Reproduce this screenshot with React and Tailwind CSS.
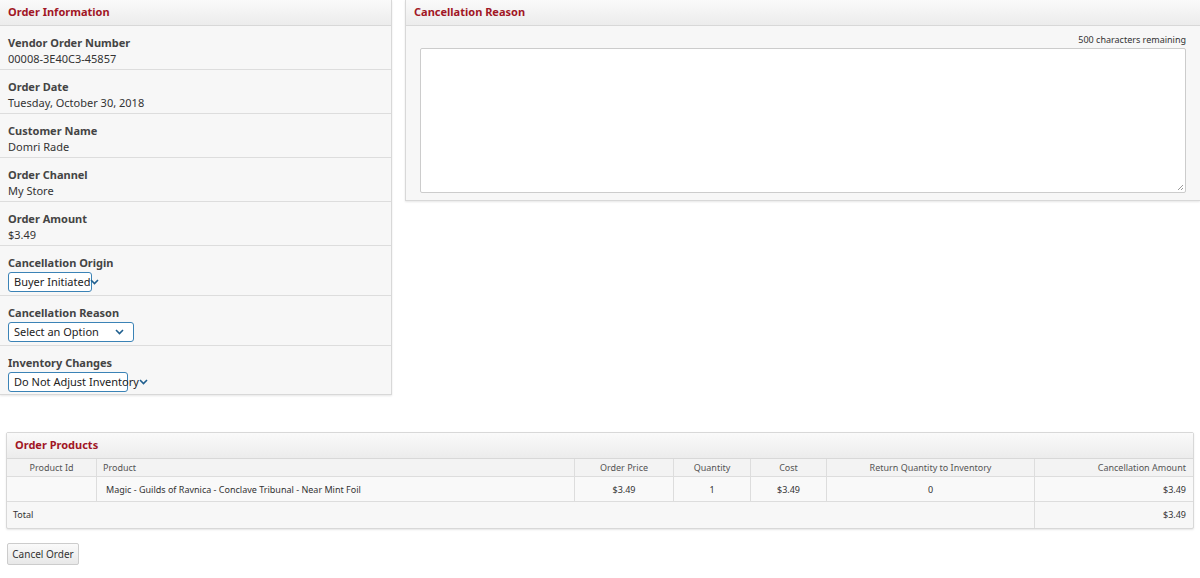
import React from "react";

const Chev = () => (
  <svg width="9" height="6" viewBox="0 0 9 6" className="ml-auto shrink-0"><path d="M1 1l3.5 3.5L8 1" stroke="#1f5f8f" strokeWidth="1.6" fill="none"/></svg>
);

const Sel = ({ text, w }) => (
  <div className={`mt-[3px] h-[20px] ${w} flex items-center whitespace-nowrap px-[5px] pr-[9px] border border-[#3b83b6] rounded-[3px] bg-white text-[11px] text-[#222]`}>
    <span>{text}</span><Chev />
  </div>
);

const Row = ({ label, value, sel, h }) => (
  <div className={`${h} border-b border-[#ddd] px-2 pt-[10px]`}>
    <div className="text-[11px] font-bold text-[#444] leading-[13px]">{label}</div>
    {value && <div className="text-[11px] text-[#333] mt-[3px] leading-[13px]">{value}</div>}
    {sel}
  </div>
);

const Head = ({ t }) => (
  <div className="h-[26px] flex items-center px-2 text-[11px] font-bold text-[#a11625] bg-gradient-to-b from-[#fafafa] to-[#ececec] border-b border-[#d8d8d8]">{t}</div>
);

export default function App() {
  const cols = [
    ["Product Id", "w-[90px] text-center"],
    ["Product", "w-[478px] text-left pl-[6px]"],
    ["Order Price", "w-[99px] text-center"],
    ["Quantity", "w-[77px] text-center"],
    ["Cost", "w-[76px] text-center"],
    ["Return Quantity to Inventory", "w-[208px] text-center"],
    ["Cancellation Amount", "flex-1 text-right pr-[7px]"],
  ];
  const vals = ["", "Magic - Guilds of Ravnica - Conclave Tribunal - Near Mint Foil", "$3.49", "1", "$3.49", "0", "$3.49"];
  return (
    <div className="w-[1200px] h-[578px] bg-white [font-family:'Liberation_Sans',Arial,sans-serif] text-[#333] relative">
      <div className="flex items-start">
        <div className="w-[392px] bg-[#f7f7f7] border border-t-0 border-l-0 border-[#d8d8d8] shadow-[0_1px_2px_rgba(0,0,0,0.1)]">
          <Head t="Order Information" />
          <Row h="h-[44px]" label="Vendor Order Number" value="00008-3E40C3-45857" />
          <Row h="h-[44px]" label="Order Date" value="Tuesday, October 30, 2018" />
          <Row h="h-[44px]" label="Customer Name" value="Domri Rade" />
          <Row h="h-[44px]" label="Order Channel" value="My Store" />
          <Row h="h-[44px]" label="Order Amount" value="$3.49" />
          <Row h="h-[50px]" label="Cancellation Origin" sel={<Sel text="Buyer Initiated" w="w-[84px]" />} />
          <Row h="h-[50px]" label="Cancellation Reason" sel={<Sel text="Select an Option" w="w-[126px]" />} />
          <div className="h-[48px] px-2 pt-[10px]">
            <div className="text-[11px] font-bold text-[#444] leading-[13px]">Inventory Changes</div>
            <Sel text="Do Not Adjust Inventory" w="w-[120px]" />
          </div>
        </div>
        <div className="ml-[13px] flex-1 h-[201px] bg-[#f7f7f7] border border-t-0 border-r-0 border-[#d8d8d8] shadow-[0_1px_2px_rgba(0,0,0,0.1)]">
          <Head t="Cancellation Reason" />
          <div className="text-right text-[9px] pr-[14px] pt-[8px] leading-[11px] text-[#333]">500 characters remaining</div>
          <div className="ml-[14px] mr-[14px] mt-[3px] h-[145px] bg-white border border-[#ccc] rounded-[2px] relative">
            <svg className="absolute right-[1px] bottom-[1px]" width="7" height="7"><path d="M6 1L1 6M6 4L4 6" stroke="#999" strokeWidth="1"/></svg>
          </div>
        </div>
      </div>
      <div className="mx-[6px] mt-[37px] border border-[#d8d8d8] rounded-[2px] bg-[#f7f7f7] shadow-[0_1px_2px_rgba(0,0,0,0.1)]">
        <Head t="Order Products" />
        <div className="flex h-[18px] items-center text-[9px] text-[#555] border-b border-[#ddd] bg-[#f3f3f3]">
          {cols.map(([t, c], i) => (
            <div key={i} className={`${c} h-full leading-[18px] ${i < 6 ? "border-r border-[#ddd]" : ""}`}>{t}</div>
          ))}
        </div>
        <div className="flex h-[25px] text-[9px] text-[#333] border-b border-[#ddd] bg-[#f9f9f9]">
          {cols.map(([t, c], i) => (
            <div key={i} className={`${c} h-full leading-[25px] ${i === 1 ? "pl-[9px]" : ""} ${i < 6 ? "border-r border-[#ddd]" : ""}`}>{vals[i]}</div>
          ))}
        </div>
        <div className="flex h-[26px] text-[9px] text-[#333]">
          <div className="w-[1028px] border-r border-[#ddd] leading-[26px] pl-[6px]">Total</div>
          <div className="flex-1 text-right pr-[7px] leading-[26px]">$3.49</div>
        </div>
      </div>
      <button className="ml-[7px] mt-[14px] h-[22px] w-[72px] text-[10px] text-[#333] border border-[#ccc] rounded-[2px] bg-gradient-to-b from-[#fafafa] to-[#e8e8e8]">Cancel Order</button>
    </div>
  );
}
